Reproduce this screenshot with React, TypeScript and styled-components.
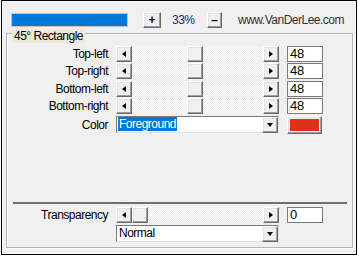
import React from "react";
import styled, { createGlobalStyle } from "styled-components";

const GlobalStyle = createGlobalStyle`
  body {
    margin: 0;
    background: #ffffff;
    font-family: "Liberation Sans", Arial, sans-serif;
    font-size: 12px;
    letter-spacing: -0.5px;
    color: #000;
  }
`;

const TRACK = 131;
const THUMB = 16;

const Frame = styled.div`
  box-sizing: border-box;
  width: 356px;
  height: 255px;
  margin-left: 1px;
  border: 1px solid #000;
  background: #f0f0f0;
  box-shadow: inset 0 0 0 1px #fbfbfb;
  display: flex;
  flex-direction: column;
  padding: 11px 3px 6px 4px;
`;

const Toolbar = styled.div`
  display: flex;
  align-items: center;
  height: 16px;
  padding-left: 5px;
`;

const Progress = styled.div`
  box-sizing: border-box;
  width: 117px;
  height: 14px;
  border: 1px solid #c4c4c4;
  background: #0078d7;
  margin-right: 15px;
`;

const raised = `
  box-sizing: border-box;
  background: #f0f0f0;
  border: 1px solid;
  border-color: #ffffff #696969 #696969 #ffffff;
  box-shadow: inset -1px -1px #a0a0a0, inset 1px 1px #e3e3e3;
`;

const ZoomButton = styled.div<{ $w: number }>`
  ${raised}
  width: ${(p) => p.$w}px;
  height: 16px;
  display: flex;
  align-items: center;
  justify-content: center;
  letter-spacing: 0;
  font-weight: bold;
  font-size: 12px;
  line-height: 1;
`;

const Percent = styled.span`
  width: 35px;
  margin-left: 11px;
  color: #1c1c9c;
`;

const Site = styled.span`
  margin-left: 16px;
  color: #333;
`;

const Group = styled.div`
  position: relative;
  flex: 1;
  margin-top: 5px;
  border: 1px solid #b4b4b4;
  box-shadow: inset 1px 1px #ffffff, 1px 1px #ffffff;
  display: flex;
  flex-direction: column;
  padding: 12px 0 5px 0;
`;

const Caption = styled.div`
  position: absolute;
  top: -4px;
  left: 5px;
  padding: 0 2px;
  height: 13px;
  line-height: 13px;
  background: #ece9d8;
`;

const Grid = styled.div`
  display: grid;
  grid-template-columns: 101px 163px 36px;
  column-gap: 8px;
  row-gap: 1.4px;
  align-items: center;
`;

const BottomGrid = styled(Grid)`
  row-gap: 2px;
  padding-top: 3px;
`;

const Label = styled.span`
  text-align: right;
  line-height: 16px;
`;

const Slider = styled.div`
  display: flex;
  height: 16px;
`;

const ArrowButton = styled.div<{ $dir: "left" | "right" | "down" }>`
  ${raised}
  width: 16px;
  height: 16px;
  flex: none;
  display: flex;
  align-items: center;
  justify-content: center;

  &::after {
    content: "";
    width: 0;
    height: 0;
    border-style: solid;
    border-color: transparent;
    ${(p) =>
      p.$dir === "left"
        ? "border-width: 3.5px 4px 3.5px 0; border-right-color: #000;"
        : p.$dir === "right"
        ? "border-width: 3.5px 0 3.5px 4px; border-left-color: #000;"
        : "border-width: 4px 3.5px 0 3.5px; border-top-color: #000;"}
  }
`;

const Track = styled.div`
  width: ${TRACK}px;
  height: 16px;
  background: repeating-conic-gradient(#ffffff 0% 25%, #e9e9e9 0% 50%) 0 0 / 2px 2px;
  display: flex;
`;

const Thumb = styled.div`
  ${raised}
  width: ${THUMB}px;
  height: 16px;
`;

const ValueBox = styled.div`
  box-sizing: border-box;
  height: 16px;
  border: 1px solid #7a7a7a;
  background: #ffffff;
  padding-left: 2px;
  font-size: 13px;
  letter-spacing: -0.3px;
  line-height: 14px;
`;

const Combo = styled.div`
  box-sizing: border-box;
  display: flex;
  align-items: center;
  height: 17px;
  border: 1px solid;
  border-color: #7a7a7a #e3e3e3 #e3e3e3 #7a7a7a;
  background: #ffffff;
  padding-left: 1px;
`;

const ComboText = styled.span<{ $selected?: boolean }>`
  flex: 1;
  line-height: 13px;

  span {
    padding: 0 1px;
    background: ${(p) => (p.$selected ? "#0078d7" : "transparent")};
    color: ${(p) => (p.$selected ? "#ffffff" : "#000")};
  }
`;

const Swatch = styled.div`
  ${raised}
  width: 35px;
  height: 18px;
  padding: 2px;

  div {
    width: 100%;
    height: 100%;
    background: #dc3218;
  }
`;

const Divider = styled.div`
  margin: auto 5px 0 6px;
  border-top: 2px solid #6f6f6f;
`;

const Scroll = ({ value }: { value: number }) => (
  <Slider>
    <ArrowButton $dir="left" />
    <Track>
      <Thumb style={{ marginLeft: Math.round(((TRACK - THUMB) * value) / 100) }} />
    </Track>
    <ArrowButton $dir="right" />
  </Slider>
);

const corners = ["Top-left", "Top-right", "Bottom-left", "Bottom-right"];

export default function App() {
  return (
    <>
      <GlobalStyle />
      <Frame>
        <Toolbar>
          <Progress />
          <ZoomButton $w={18}>+</ZoomButton>
          <Percent>33%</Percent>
          <ZoomButton $w={15}>–</ZoomButton>
          <Site>www.VanDerLee.com</Site>
        </Toolbar>

        <Group>
          <Caption>45° Rectangle</Caption>
          <Grid>
            {corners.map((c) => (
              <React.Fragment key={c}>
                <Label>{c}</Label>
                <Scroll value={48} />
                <ValueBox>48</ValueBox>
              </React.Fragment>
            ))}
            <Label>Color</Label>
            <Combo>
              <ComboText $selected>
                <span>Foreground</span>
              </ComboText>
              <ArrowButton $dir="down" />
            </Combo>
            <Swatch>
              <div />
            </Swatch>
          </Grid>

          <Divider />
          <BottomGrid>
            <Label>Transparency</Label>
            <Scroll value={0} />
            <ValueBox>0</ValueBox>
            <span />
            <Combo>
              <ComboText>
                <span>Normal</span>
              </ComboText>
              <ArrowButton $dir="down" />
            </Combo>
          </BottomGrid>
        </Group>
      </Frame>
    </>
  );
}
